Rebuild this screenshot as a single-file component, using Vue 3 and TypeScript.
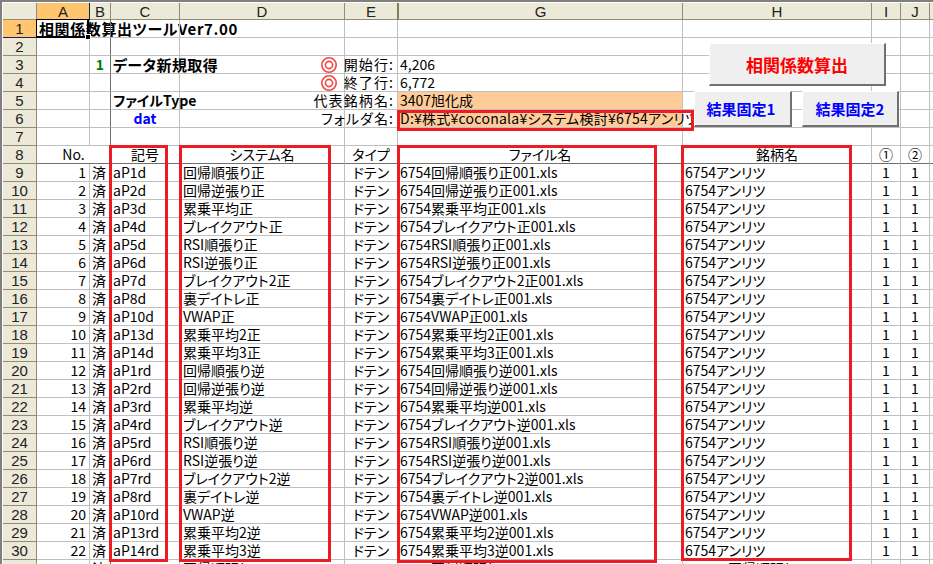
<script setup lang="ts">
const cols = ['A', 'B', 'C', 'D', 'E', 'G', 'H', 'I', 'J']
const rows: [string, string][] = [
  ['aP1d', '回帰順張り正'], ['aP2d', '回帰逆張り正'], ['aP3d', '累乗平均正'], ['aP4d', 'ブレイクアウト正'],
  ['aP5d', 'RSI順張り正'], ['aP6d', 'RSI逆張り正'], ['aP7d', 'ブレイクアウト2正'], ['aP8d', '裏デイトレ正'],
  ['aP10d', 'VWAP正'], ['aP13d', '累乗平均2正'], ['aP14d', '累乗平均3正'], ['aP1rd', '回帰順張り逆'],
  ['aP2rd', '回帰逆張り逆'], ['aP3rd', '累乗平均逆'], ['aP4rd', 'ブレイクアウト逆'], ['aP5rd', 'RSI順張り逆'],
  ['aP6rd', 'RSI逆張り逆'], ['aP7rd', 'ブレイクアウト2逆'], ['aP8rd', '裏デイトレ逆'], ['aP10rd', 'VWAP逆'],
  ['aP13rd', '累乗平均2逆'], ['aP14rd', '累乗平均3逆'],
]
const top: Record<number, Record<string, { t?: string; c?: string }>> = {
  1: { A: { t: '相関係数算出ツールVer7.00', c: 'bold title' } },
  2: {},
  3: { B: { t: '1', c: 'bold green center' }, C: { t: 'データ新規取得', c: 'bold large' }, E: { t: '開始行:', c: 'right label' }, G: { t: '4,206' } },
  4: { E: { t: '終了行:', c: 'right label' }, G: { t: '6,772' } },
  5: { C: { t: 'ファイルType', c: 'bold' }, E: { t: '代表銘柄名:', c: 'right label' }, G: { t: '3407旭化成', c: 'fill' } },
  6: { C: { t: 'dat', c: 'bold blue center' }, E: { t: 'フォルダ名:', c: 'right label' }, G: { t: 'D:¥株式¥coconala¥システム検討¥6754アンリツ', c: 'fill folder' } },
  7: {},
}
</script>

<template>
  <div class="window">
    <div class="sheet">
      <div class="corner"></div>
      <div v-for="c in cols" :key="c" class="colhead" :class="{ active: c === 'A', hiddenleft: c === 'G' }">{{ c }}</div>
      <div class="colhead tail"></div>

      <template v-for="n in 7" :key="n">
        <div class="rowhead" :class="{ active: n === 1 }">{{ n }}</div>
        <div
          v-for="c in cols"
          :key="c"
          class="cell"
          :class="[top[n][c]?.c, { freeze: c === 'B' }]"
        ><span>{{ top[n][c]?.t }}</span></div>
        <div class="cell tail"></div>
      </template>

      <div class="rowhead">8</div>
      <div class="cell center span2 freeze split">No.</div>
      <div class="cell center split">記号</div>
      <div class="cell center split">システム名</div>
      <div class="cell center split">タイプ</div>
      <div class="cell center split">ファイル名</div>
      <div class="cell center split">銘柄名</div>
      <div class="cell center split">①</div>
      <div class="cell center split">②</div>
      <div class="cell tail split"></div>

      <template v-for="(r, i) in rows" :key="r[0]">
        <div class="rowhead">{{ i + 9 }}</div>
        <div class="cell right">{{ i + 1 }}</div>
        <div class="cell freeze">済</div>
        <div class="cell">{{ r[0] }}</div>
        <div class="cell pad">{{ r[1] }}</div>
        <div class="cell center">ドテン</div>
        <div class="cell">6754{{ r[1] }}001.xls</div>
        <div class="cell">6754アンリツ</div>
        <div class="cell center">1</div>
        <div class="cell center">1</div>
        <div class="cell tail"></div>
      </template>

      <div class="rowhead blank"></div>
      <div class="cell right"></div>
      <div class="cell freeze">済</div>
      <div class="cell"></div>
      <div class="cell pad">回帰順張り</div>
      <div class="cell center"></div>
      <div class="cell indent-g">回帰順張り</div>
      <div class="cell indent-h">回帰順張り</div>
      <div class="cell center"></div>
      <div class="cell center"></div>
      <div class="cell tail"></div>
    </div>

    <div class="selection"><i></i></div>
    <svg class="target t1" viewBox="0 0 18 18"><circle cx="9" cy="9" r="7.2" /><circle cx="9" cy="9" r="3.6" /></svg>
    <svg class="target t2" viewBox="0 0 18 18"><circle cx="9" cy="9" r="7.2" /><circle cx="9" cy="9" r="3.6" /></svg>

    <div class="mark m-c"></div>
    <div class="mark m-d"></div>
    <div class="mark m-g"></div>
    <div class="mark m-h"></div>
    <div class="mark m-f"></div>

    <div class="btn big">相関係数算出</div>
    <div class="btn b1">結果固定1</div>
    <div class="btn b2">結果固定2</div>
  </div>
</template>

<style>
html, body { margin: 0; background: #fff; }
</style>

<style scoped>
.window {
  position: relative;
  width: 933px;
  height: 564px;
  overflow: hidden;
  box-sizing: border-box;
  padding: 3px 0 0 3px;
  background: #fff;
  font-family: "Noto Sans CJK JP", "Liberation Sans", sans-serif;
  font-size: 14px;
  font-feature-settings: "palt";
  color: #000;
}
.window::before {
  content: "";
  position: absolute;
  inset: 0 0 auto 0;
  height: 2px;
  background: #808080;
}
.window::after {
  content: "";
  position: absolute;
  inset: 0 auto 0 0;
  width: 2px;
  background: #808080;
}
.sheet {
  display: grid;
  grid-template-columns: 34px 53px 21px 69px 165px 53px 285px 189px 29px 29px 10px;
  grid-auto-rows: 18px;
  grid-template-rows: 17px;
}
.corner, .colhead, .rowhead {
  background: #ece9d8;
  border-right: 1px solid #8f8c78;
  border-bottom: 1px solid #8f8c78;
  box-sizing: border-box;
  display: flex;
  align-items: center;
  justify-content: center;
  color: #222;
  font-family: "Liberation Sans", sans-serif;
  font-size: 15px;
}
.colhead.active, .rowhead.active { background: #ffc66f; border-color: #0a246a; }
.colhead.hiddenleft { border-left: 2px solid #808060; margin-left: -1px; }
.colhead.tail { border-right: 0; }
.cell {
  box-sizing: border-box;
  border-right: 1px solid #c0c0c0;
  border-bottom: 1px solid #c0c0c0;
  display: flex;
  align-items: center;
  white-space: nowrap;
  padding-left: 2px;
  line-height: 17px;
  min-width: 0;
}
.cell.pad { padding-left: 3px; }
.cell.right { justify-content: flex-end; padding: 0 3px 0 0; }
.cell.center { justify-content: center; padding: 0; }
.cell.span2 { grid-column: span 2; }
.cell.freeze { border-right-color: #707070; }
.cell.split { border-bottom-color: #707070; }
.cell.tail { border-right: 0; }
.cell.bold { font-weight: 700; }
.cell.title { font-size: 15px; letter-spacing: 0.6px; }
.cell.large { font-size: 15px; letter-spacing: 0.4px; }
.cell.label { letter-spacing: 1.1px; }
.cell.folder { letter-spacing: 0.25px; }
.cell.green { color: #008000; }
.cell.blue { color: #0000ff; }
.cell.fill { background: #ffcc99; }
.cell.indent-g { padding-left: 33px; }
.cell.indent-h { padding-left: 45px; }
.selection {
  position: absolute;
  left: 36px;
  top: 19px;
  width: 53px;
  height: 19px;
  border-style: solid;
  border-color: #000;
  border-width: 1px 2px 2px 1px;
  box-sizing: border-box;
}
.selection i {
  position: absolute;
  right: -4px;
  bottom: -4px;
  width: 6px;
  height: 6px;
  background: #000;
  border: 1px solid #fff;
  box-sizing: border-box;
}
.target {
  position: absolute;
  left: 320px;
  width: 18px;
  height: 18px;
  fill: none;
  stroke: #f04848;
  stroke-width: 1.6;
}
.t1 { top: 56px; }
.t2 { top: 74px; }
.mark {
  position: absolute;
  box-sizing: border-box;
  border: 3px solid #ed1c24;
  top: 145px;
}
.m-c { left: 109px; width: 59px; height: 417px; }
.m-d { left: 179px; width: 152px; height: 417px; }
.m-g { left: 397px; width: 260px; height: 418px; }
.m-h { left: 681px; width: 171px; height: 416px; }
.m-f { left: 397px; top: 110px; width: 297px; height: 21px; }
.btn {
  position: absolute;
  box-sizing: border-box;
  background: #efefef;
  border-top: 1px solid #fff;
  border-left: 1px solid #fff;
  border-right: 2px solid #707070;
  border-bottom: 2px solid #707070;
  display: flex;
  align-items: center;
  justify-content: center;
  font-weight: 700;
  white-space: nowrap;
}
.big { left: 709px; top: 43px; width: 177px; height: 43px; color: #ff0000; font-size: 17px; }
.b1 { left: 694px; top: 91px; width: 98px; height: 36px; color: #0000ff; font-size: 15px; padding-right: 3px; }
.b2 { left: 802px; top: 91px; width: 97px; height: 36px; color: #0000ff; font-size: 15px; }
</style>
